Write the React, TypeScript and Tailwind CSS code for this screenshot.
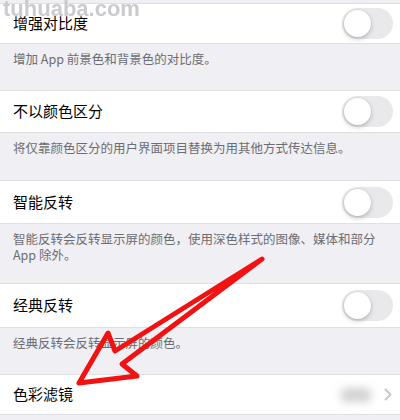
import React from "react";

const font = { fontFamily: '"Noto Sans CJK SC", "Noto Sans", sans-serif' };

function Toggle() {
  return (
    <div className="w-[51px] h-[31px] rounded-full bg-[#e9e9eb] p-[2px] flex items-center">
      <div className="w-[27px] h-[27px] rounded-full bg-white shadow-[0_2px_5px_rgba(0,0,0,0.22),0_0_0_0.5px_rgba(0,0,0,0.06)]" />
    </div>
  );
}

function Row({ title, h, children }: { title: string; h: string; children?: React.ReactNode }) {
  return (
    <div className={`flex items-center justify-between bg-white pl-[13px] pr-[7px] border-y border-[#e0e0e4] ${h}`}>
      <span className="text-[15px] text-black">{title}</span>
      {children}
    </div>
  );
}

function Note({ text, h }: { text: string; h: string }) {
  return (
    <div className={`px-[13px] pt-[7px] text-[12.5px] leading-[16px] text-[#6d6d72] ${h}`}>{text}</div>
  );
}

export default function App() {
  return (
    <div className="relative w-[400px] h-[420px] overflow-hidden bg-[#efeff4]" style={font}>
      <div className="h-[3px]" />
      <Row title="增强对比度" h="h-[41px]">
        <Toggle />
      </Row>
      <Note text="增加 App 前景色和背景色的对比度。" h="h-[46px]" />
      <Row title="不以颜色区分" h="h-[43px]">
        <Toggle />
      </Row>
      <Note text="将仅靠颜色区分的用户界面项目替换为用其他方式传达信息。" h="h-[47px]" />
      <Row title="智能反转" h="h-[44px]">
        <Toggle />
      </Row>
      <Note text="智能反转会反转显示屏的颜色，使用深色样式的图像、媒体和部分 App 除外。" h="h-[59px]" />
      <Row title="经典反转" h="h-[45px]">
        <Toggle />
      </Row>
      <Note text="经典反转会反转显示屏的颜色。" h="h-[46px]" />
      <Row title="色彩滤镜" h="h-[41px]">
        <div className="flex items-center gap-[12px]">
          <div className="w-[32px] h-[14px] rounded-full bg-[#d2d2d4] blur-[4px]" />
          <svg width="8" height="13" viewBox="0 0 8 13" className="mr-[1px]">
            <path d="M1.5 1.5 L6.5 6.5 L1.5 11.5" fill="none" stroke="#c7c7cc" strokeWidth="2" strokeLinecap="round" strokeLinejoin="round" />
          </svg>
        </div>
      </Row>

      {/* watermark */}
      <div
        className="absolute left-[3px] top-[-2px] text-[22px] font-bold leading-none text-[#c6c6c8] opacity-90"
        style={{ fontFamily: '"Liberation Sans", Arial, sans-serif' }}
      >
        tuhuaba.com
      </div>

      {/* red arrow */}
      <svg className="absolute inset-0 pointer-events-none" width="400" height="420" viewBox="0 0 400 420">
        <path
          d="M262 259 L115 351 L108 333 L79 383 L137 376 L122 364 Z"
          fill="none"
          stroke="#f21212"
          strokeWidth="5"
          strokeLinejoin="round"
          strokeLinecap="round"
        />
      </svg>
    </div>
  );
}
